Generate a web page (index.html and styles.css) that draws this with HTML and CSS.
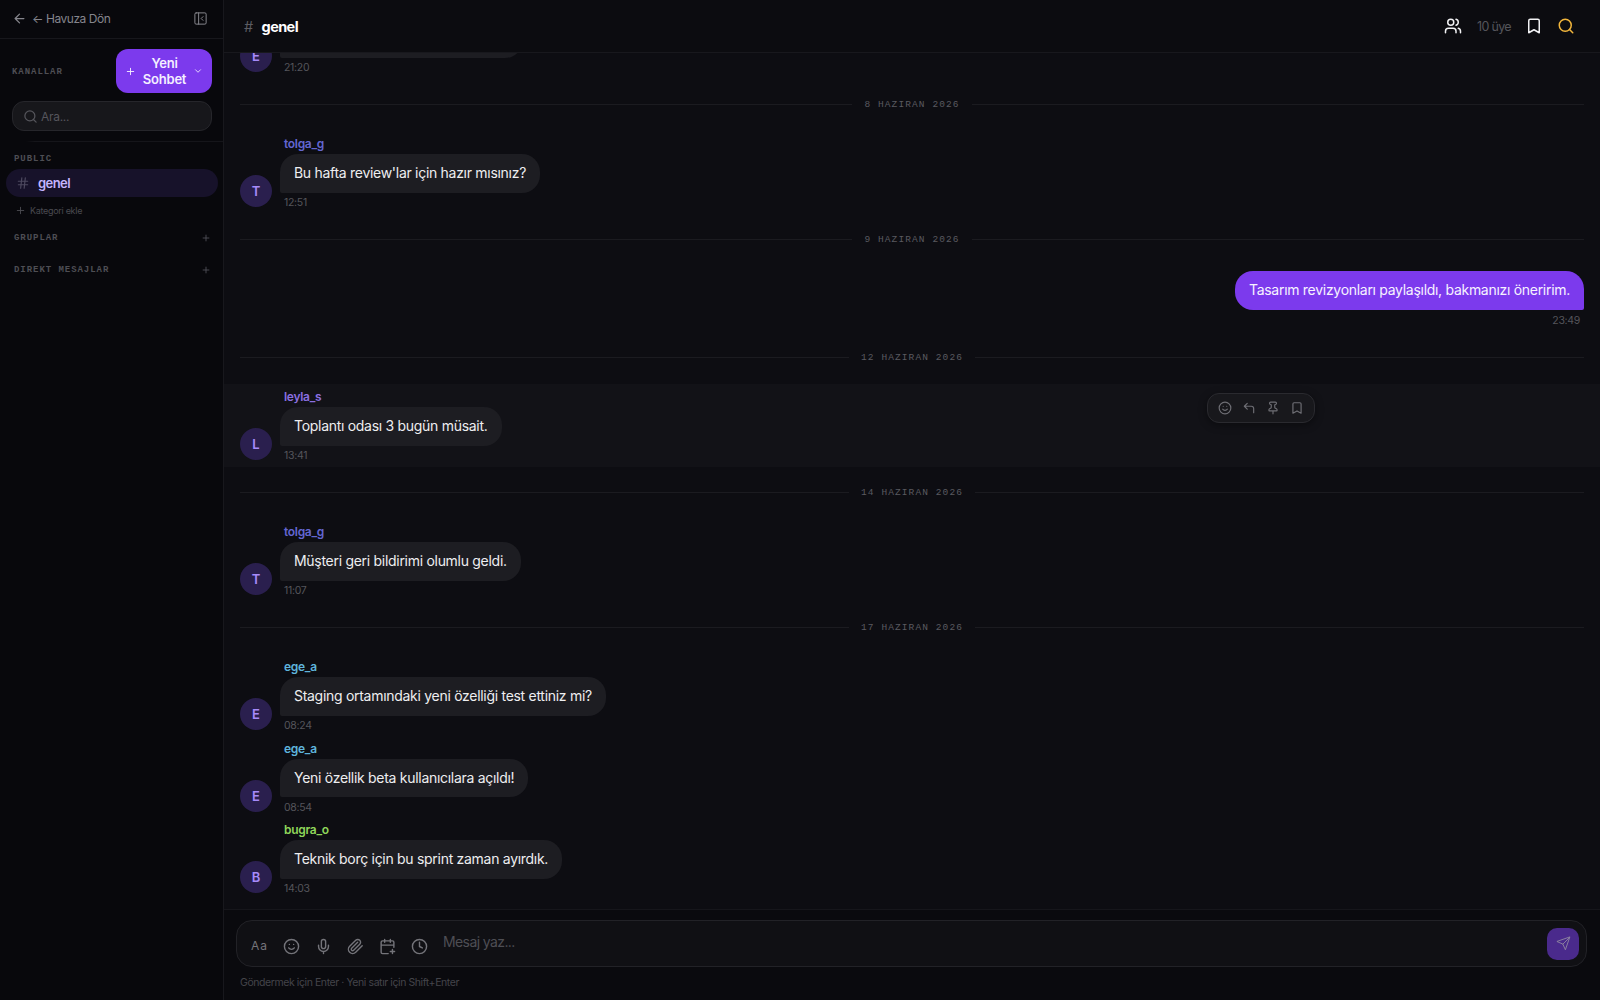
FILE: index.html
```html
<!DOCTYPE html>
<html lang="en">
<head>
    <meta charset="UTF-8">
    <meta name="viewport" content="width=device-width, initial-scale=1.0">
    <title>genel</title>
    <link rel="stylesheet" href="styles.css">
</head>
<body>
    <svg class="sprite" xmlns="http://www.w3.org/2000/svg">
        <symbol id="i-back" viewBox="0 0 24 24"><path d="M12 19l-7-7 7-7M19 12H5"/></symbol>
        <symbol id="i-panel" viewBox="0 0 24 24"><rect x="3" y="3" width="18" height="18" rx="2"/><path d="M9 3v18M16 15l-3-3 3-3"/></symbol>
        <symbol id="i-plus" viewBox="0 0 24 24"><path d="M5 12h14M12 5v14"/></symbol>
        <symbol id="i-chevron" viewBox="0 0 24 24"><path d="M6 9l6 6 6-6"/></symbol>
        <symbol id="i-search" viewBox="0 0 24 24"><circle cx="11" cy="11" r="8"/><path d="M21 21l-4.3-4.3"/></symbol>
        <symbol id="i-hash" viewBox="0 0 24 24"><path d="M4 9h16M4 15h16M10 3L8 21M16 3l-2 18"/></symbol>
        <symbol id="i-users" viewBox="0 0 24 24"><path d="M16 21v-2a4 4 0 0 0-4-4H6a4 4 0 0 0-4 4v2"/><circle cx="9" cy="7" r="4"/><path d="M22 21v-2a4 4 0 0 0-3-3.87M16 3.13a4 4 0 0 1 0 7.75"/></symbol>
        <symbol id="i-bookmark" viewBox="0 0 24 24"><path d="M19 21l-7-4-7 4V5a2 2 0 0 1 2-2h10a2 2 0 0 1 2 2z"/></symbol>
        <symbol id="i-smile" viewBox="0 0 24 24"><circle cx="12" cy="12" r="10"/><path d="M8 14s1.5 2 4 2 4-2 4-2M9 9h.01M15 9h.01"/></symbol>
        <symbol id="i-reply" viewBox="0 0 24 24"><path d="M9 14L4 9l5-5M20 20v-7a4 4 0 0 0-4-4H4"/></symbol>
        <symbol id="i-pin" viewBox="0 0 24 24"><path d="M12 17v5M9 10.76a2 2 0 0 1-1.11 1.79l-1.78.9A2 2 0 0 0 5 15.24V16a1 1 0 0 0 1 1h12a1 1 0 0 0 1-1v-.76a2 2 0 0 0-1.11-1.79l-1.78-.9A2 2 0 0 1 15 10.76V7a1 1 0 0 1 1-1 2 2 0 0 0 0-4H8a2 2 0 0 0 0 4 1 1 0 0 1 1 1z"/></symbol>
        <symbol id="i-mic" viewBox="0 0 24 24"><path d="M12 2a3 3 0 0 0-3 3v7a3 3 0 0 0 6 0V5a3 3 0 0 0-3-3zM19 10v2a7 7 0 0 1-14 0v-2M12 19v3"/></symbol>
        <symbol id="i-clip" viewBox="0 0 24 24"><path d="M21.44 11.05l-9.19 9.19a6 6 0 0 1-8.49-8.49l8.57-8.57A4 4 0 1 1 18 8.84l-8.59 8.57a2 2 0 0 1-2.83-2.83l8.49-8.48"/></symbol>
        <symbol id="i-calendar" viewBox="0 0 24 24"><path d="M8 2v4M16 2v4M21 13V6a2 2 0 0 0-2-2H5a2 2 0 0 0-2 2v14a2 2 0 0 0 2 2h8M3 10h18M16 19h6M19 16v6"/></symbol>
        <symbol id="i-clock" viewBox="0 0 24 24"><circle cx="12" cy="12" r="10"/><path d="M12 6v6l4 2"/></symbol>
        <symbol id="i-send" viewBox="0 0 24 24"><path d="M22 2l-7 20-4-9-9-4zM22 2L11 13"/></symbol>
    </svg>

    <div class="app">
        <aside class="sidebar">
            <div class="side-top">
                <a class="back-link"><svg class="icon icon-15"><use href="#i-back"/></svg><span>← Havuza Dön</span></a>
                <svg class="icon icon-panel"><use href="#i-panel"/></svg>
            </div>

            <div class="side-head">
                <span class="mono-label">KANALLAR</span>
                <button class="new-chat">
                    <svg class="icon icon-11"><use href="#i-plus"/></svg>
                    <span>Yeni Sohbet</span>
                    <svg class="icon icon-10"><use href="#i-chevron"/></svg>
                </button>
            </div>

            <div class="side-search">
                <div class="search-box">
                    <svg class="icon icon-15"><use href="#i-search"/></svg>
                    <span>Ara...</span>
                </div>
            </div>

            <div class="side-list">
                <div class="mono-label group-name">PUBLIC</div>
                <div class="channel">
                    <svg class="icon icon-14"><use href="#i-hash"/></svg>
                    <span>genel</span>
                </div>
                <div class="add-cat"><svg class="icon icon-11"><use href="#i-plus"/></svg><span>Kategori ekle</span></div>
                <div class="group-row">
                    <span class="mono-label">GRUPLAR</span>
                    <svg class="icon icon-10"><use href="#i-plus"/></svg>
                </div>
                <div class="group-row">
                    <span class="mono-label">DIREKT MESAJLAR</span>
                    <svg class="icon icon-10"><use href="#i-plus"/></svg>
                </div>
            </div>
        </aside>

        <main class="main">
            <header class="topbar">
                <div class="topbar-title">
                    <span class="title-hash">#</span>
                    <span>genel</span>
                </div>
                <div class="topbar-tools">
                    <svg class="icon icon-18 white"><use href="#i-users"/></svg>
                    <span class="member-count">10 üye</span>
                    <svg class="icon icon-18 white"><use href="#i-bookmark"/></svg>
                    <svg class="icon icon-18 amber"><use href="#i-search"/></svg>
                </div>
            </header>

            <div class="messages">
                <!-- scrolled past: only the bottom of this one shows -->
                <div class="msg">
                    <div class="avatar">E</div>
                    <div class="msg-body">
                        <div class="bubble bubble-cut"></div>
                        <div class="msg-time">21:20</div>
                    </div>
                </div>

                <div class="date-line"><span>8 HAZIRAN 2026</span></div>

                <div class="msg">
                    <div class="avatar">T</div>
                    <div class="msg-body">
                        <div class="msg-name c-tolga">tolga_g</div>
                        <div class="bubble">Bu hafta review'lar için hazır mısınız?</div>
                        <div class="msg-time">12:51</div>
                    </div>
                </div>

                <div class="date-line"><span>9 HAZIRAN 2026</span></div>

                <div class="msg msg-own">
                    <div class="msg-body">
                        <div class="bubble">Tasarım revizyonları paylaşıldı, bakmanızı öneririm.</div>
                        <div class="msg-time">23:49</div>
                    </div>
                </div>

                <div class="date-line"><span>12 HAZIRAN 2026</span></div>

                <div class="msg msg-hover">
                    <div class="avatar">L</div>
                    <div class="msg-body">
                        <div class="msg-name c-leyla">leyla_s</div>
                        <div class="bubble">Toplantı odası 3 bugün müsait.</div>
                        <div class="msg-time">13:41</div>
                    </div>
                    <div class="msg-actions">
                        <svg class="icon icon-14"><use href="#i-smile"/></svg>
                        <svg class="icon icon-14"><use href="#i-reply"/></svg>
                        <svg class="icon icon-14"><use href="#i-pin"/></svg>
                        <svg class="icon icon-14"><use href="#i-bookmark"/></svg>
                    </div>
                </div>

                <div class="date-line"><span>14 HAZIRAN 2026</span></div>

                <div class="msg">
                    <div class="avatar">T</div>
                    <div class="msg-body">
                        <div class="msg-name c-tolga">tolga_g</div>
                        <div class="bubble">Müşteri geri bildirimi olumlu geldi.</div>
                        <div class="msg-time">11:07</div>
                    </div>
                </div>

                <div class="date-line"><span>17 HAZIRAN 2026</span></div>

                <div class="msg">
                    <div class="avatar">E</div>
                    <div class="msg-body">
                        <div class="msg-name c-ege">ege_a</div>
                        <div class="bubble">Staging ortamındaki yeni özelliği test ettiniz mi?</div>
                        <div class="msg-time">08:24</div>
                    </div>
                </div>
                <div class="msg">
                    <div class="avatar">E</div>
                    <div class="msg-body">
                        <div class="msg-name c-ege">ege_a</div>
                        <div class="bubble">Yeni özellik beta kullanıcılara açıldı!</div>
                        <div class="msg-time">08:54</div>
                    </div>
                </div>
                <div class="msg">
                    <div class="avatar">B</div>
                    <div class="msg-body">
                        <div class="msg-name c-bugra">bugra_o</div>
                        <div class="bubble">Teknik borç için bu sprint zaman ayırdık.</div>
                        <div class="msg-time">14:03</div>
                    </div>
                </div>
            </div>

            <footer class="composer">
                <div class="composer-box">
                    <div class="composer-tools">
                        <span class="font-btn">Aa</span>
                        <svg class="icon icon-17"><use href="#i-smile"/></svg>
                        <svg class="icon icon-17"><use href="#i-mic"/></svg>
                        <svg class="icon icon-17"><use href="#i-clip"/></svg>
                        <svg class="icon icon-17"><use href="#i-calendar"/></svg>
                        <svg class="icon icon-17"><use href="#i-clock"/></svg>
                    </div>
                    <div class="composer-input">Mesaj yaz...</div>
                    <button class="send-btn"><svg class="icon icon-15"><use href="#i-send"/></svg></button>
                </div>
                <div class="composer-hint">Göndermek için Enter · Yeni satır için Shift+Enter</div>
            </footer>
        </main>
    </div>
</body>
</html>
```

FILE: styles.css
```css
* {
  box-sizing: border-box;
}

body {
  margin: 0;
  height: 100vh;
  overflow: hidden;
  background-color: #0d0d12;
  color: #fff;
  font-family: Inter, "Noto Sans", sans-serif;
}

.sprite {
  display: none;
}

.icon {
  flex-shrink: 0;
  fill: none;
  stroke: currentColor;
  stroke-width: 2;
  stroke-linecap: round;
  stroke-linejoin: round;
}

.icon-10 { width: 10px; height: 10px; }
.icon-11 { width: 11px; height: 11px; }
.icon-14 { width: 14px; height: 14px; }
.icon-15 { width: 15px; height: 15px; }
.icon-17 { width: 17px; height: 17px; }
.icon-18 { width: 18px; height: 18px; }
.white { color: #f2f2f4; }
.amber { color: #f2b63c; }

.app {
  display: flex;
  height: 100%;
}

.mono-label {
  font-family: "Liberation Mono", monospace;
  font-size: 9px;
  font-weight: 700;
  letter-spacing: 0.95px;
  color: #4e4e54;
}

/* sidebar */

.sidebar {
  width: 224px;
  flex-shrink: 0;
  background-color: #08080c;
  border-right: 1px solid #18181d;
}

.side-top {
  height: 39px;
  padding: 0 15px 2px 12px;
  display: flex;
  align-items: center;
  justify-content: space-between;
  border-bottom: 1px solid #17171c;
  color: #85858c;
}

.back-link {
  display: flex;
  align-items: center;
  gap: 5px;
  font-size: 12px;
  letter-spacing: -0.45px;
}

.icon-panel {
  width: 15px;
  height: 15px;
  stroke-width: 1.6;
}

.side-head {
  padding: 10px 11px 0 12px;
  display: flex;
  align-items: center;
  justify-content: space-between;
}

.side-head .mono-label {
  padding-top: 2px;
}

.new-chat {
  width: 96px;
  height: 44px;
  padding: 0 9px;
  display: flex;
  align-items: center;
  gap: 4px;
  border: none;
  border-radius: 12px;
  background-color: #7c3aed;
  color: #f4efff;
  font-family: inherit;
  font-size: 13px;
  font-weight: 600;
  line-height: 16px;
  letter-spacing: -0.2px;
}

.new-chat span {
  flex: 1;
  text-align: center;
}

.side-search {
  padding: 8px 11px 10px 12px;
  border-bottom: 1px solid #141419;
  border-image: linear-gradient(90deg, transparent 12%, #15151a 16%) 1;
}

.search-box {
  height: 30px;
  padding: 0 10px;
  display: flex;
  align-items: center;
  gap: 3px;
  background-color: #17171b;
  border: 1px solid #26262b;
  border-radius: 12px;
  color: #55555b;
  font-size: 12px;
  letter-spacing: -0.3px;
}

.side-list {
  padding: 12px 5px 0 6px;
}

.group-name {
  padding-left: 8px;
  line-height: 10px;
}

.channel {
  height: 28px;
  margin-top: 5px;
  padding-left: 10px;
  display: flex;
  align-items: center;
  gap: 8px;
  background-color: #17122a;
  border-radius: 14px;
  color: #c4b5fd;
  font-size: 13px;
  font-weight: 600;
  letter-spacing: -0.55px;
}

.channel .icon {
  color: #4e4a60;
}

.add-cat {
  margin-top: 7px;
  padding-left: 9px;
  display: flex;
  align-items: center;
  gap: 4px;
  color: #4a4a50;
  font-size: 9px;
  letter-spacing: -0.3px;
  height: 12px;
}

.group-row {
  height: 12px;
  padding: 0 7px 0 8px;
  display: flex;
  align-items: center;
  justify-content: space-between;
  color: #56565c;
}

.add-cat + .group-row {
  margin-top: 16px;
}

.group-row + .group-row {
  margin-top: 20px;
}

/* main column */

.main {
  flex: 1;
  min-width: 0;
  display: flex;
  flex-direction: column;
}

.topbar {
  height: 53px;
  flex-shrink: 0;
  padding: 0 25px 0 20px;
  display: flex;
  align-items: center;
  justify-content: space-between;
  background-color: #0c0c10;
  border-bottom: 1px solid #18181d;
}

.topbar-title {
  display: flex;
  align-items: center;
  gap: 9px;
  font-size: 14.5px;
  font-weight: 700;
  letter-spacing: -0.6px;
}

.title-hash {
  color: #5c5c62;
  font-weight: 400;
}

.topbar-tools {
  display: flex;
  align-items: center;
  gap: 14px;
}

.member-count {
  margin-left: 1px;
  color: #55555b;
  font-size: 12.5px;
  letter-spacing: -0.65px;
}

/* messages */

.messages {
  flex: 1;
  min-height: 0;
  overflow: hidden;
  display: flex;
  flex-direction: column;
  justify-content: flex-end;
  padding-bottom: 9px;
}

.msg {
  position: relative;
  flex-shrink: 0;
  padding: 3.5px 16px 3px;
  display: flex;
  align-items: flex-end;
  gap: 8px;
}

.msg-hover {
  margin-top: -2px;
  padding-top: 5.5px;
  background-color: #121217;
}

.msg-own {
  justify-content: flex-end;
}

.avatar {
  width: 32px;
  height: 32px;
  margin-bottom: 4px;
  flex-shrink: 0;
  display: flex;
  align-items: center;
  justify-content: center;
  border-radius: 50%;
  background-color: #2a1f4e;
  color: #a78bfa;
  font-size: 13px;
  font-weight: 600;
}

.msg-name {
  margin-left: 4px;
  margin-bottom: 2px;
  font-size: 12px;
  font-weight: 600;
  line-height: 16px;
  letter-spacing: -0.3px;
}

.c-tolga { color: #6366d1; }
.c-leyla { color: #8b6fe0; }
.c-ege { color: #5fb4dc; }
.c-bugra { color: #8fd65a; }

.bubble {
  width: fit-content;
  padding: 10px 14px;
  border-radius: 18px 18px 18px 2px;
  background-color: #1d1d22;
  color: #eeeef0;
  font-size: 14px;
  line-height: 18.5px;
  letter-spacing: -0.29px;
}

.bubble-cut {
  width: 243px;
  height: 38px;
}

.msg-own .bubble {
  border-radius: 18px 18px 2px 18px;
  background-color: #7c3aed;
  color: #f6f2ff;
}

.msg-time {
  margin: 2.5px 4px 0;
  color: #55555b;
  font-size: 10.5px;
  line-height: 16px;
  letter-spacing: -0.3px;
}

.msg-own .msg-time {
  margin-top: 3.5px;
  text-align: right;
}

.msg-actions {
  position: absolute;
  top: 9px;
  right: 285px;
  height: 30px;
  padding: 0 10px;
  display: flex;
  align-items: center;
  gap: 10px;
  background-color: #18181c;
  border: 1px solid #2a2a2f;
  border-radius: 12px;
  color: #6e6e74;
  box-shadow: 0 2px 8px rgba(0, 0, 0, 0.4);
}

.date-line {
  flex-shrink: 0;
  height: 53.5px;
  padding: 0 16px 3.5px;
  display: flex;
  align-items: center;
  gap: 12px;
  font-family: "Liberation Mono", monospace;
  font-size: 9.5px;
  letter-spacing: 1.1px;
  color: #5a5a60;
}

.date-line::before,
.date-line::after {
  content: "";
  flex: 1;
  height: 1px;
  background-color: #1b1b20;
}

/* composer */

.composer {
  flex-shrink: 0;
  height: 91px;
  padding: 10px 13px 0 12px;
  background-color: #0a0a0e;
  border-top: 1px solid #16161b;
}

.composer-box {
  height: 47px;
  padding: 0 7px 0 14px;
  display: flex;
  align-items: center;
  background-color: #101014;
  border: 1px solid #222227;
  border-radius: 16px;
}

.composer-tools {
  margin-top: 6px;
  display: flex;
  align-items: center;
  gap: 15px;
  color: #74747a;
}

.font-btn {
  width: 17px;
  margin-top: -2px;
  font-size: 12px;
  font-weight: 400;
  letter-spacing: 1px;
}

.composer-input {
  flex: 1;
  margin-left: 15px;
  margin-bottom: 4px;
  color: #4e4e54;
  font-size: 14px;
  letter-spacing: -0.6px;
}

.send-btn {
  width: 32px;
  height: 32px;
  display: flex;
  align-items: center;
  justify-content: center;
  border: none;
  border-radius: 10px;
  background-color: #4a2a8c;
  color: #8d84a0;
}

.send-btn .icon {
  stroke-width: 1.5;
}

.composer-hint {
  margin-top: 9px;
  padding-left: 4px;
  color: #44444a;
  font-size: 10.5px;
  letter-spacing: -0.42px;
}
```
